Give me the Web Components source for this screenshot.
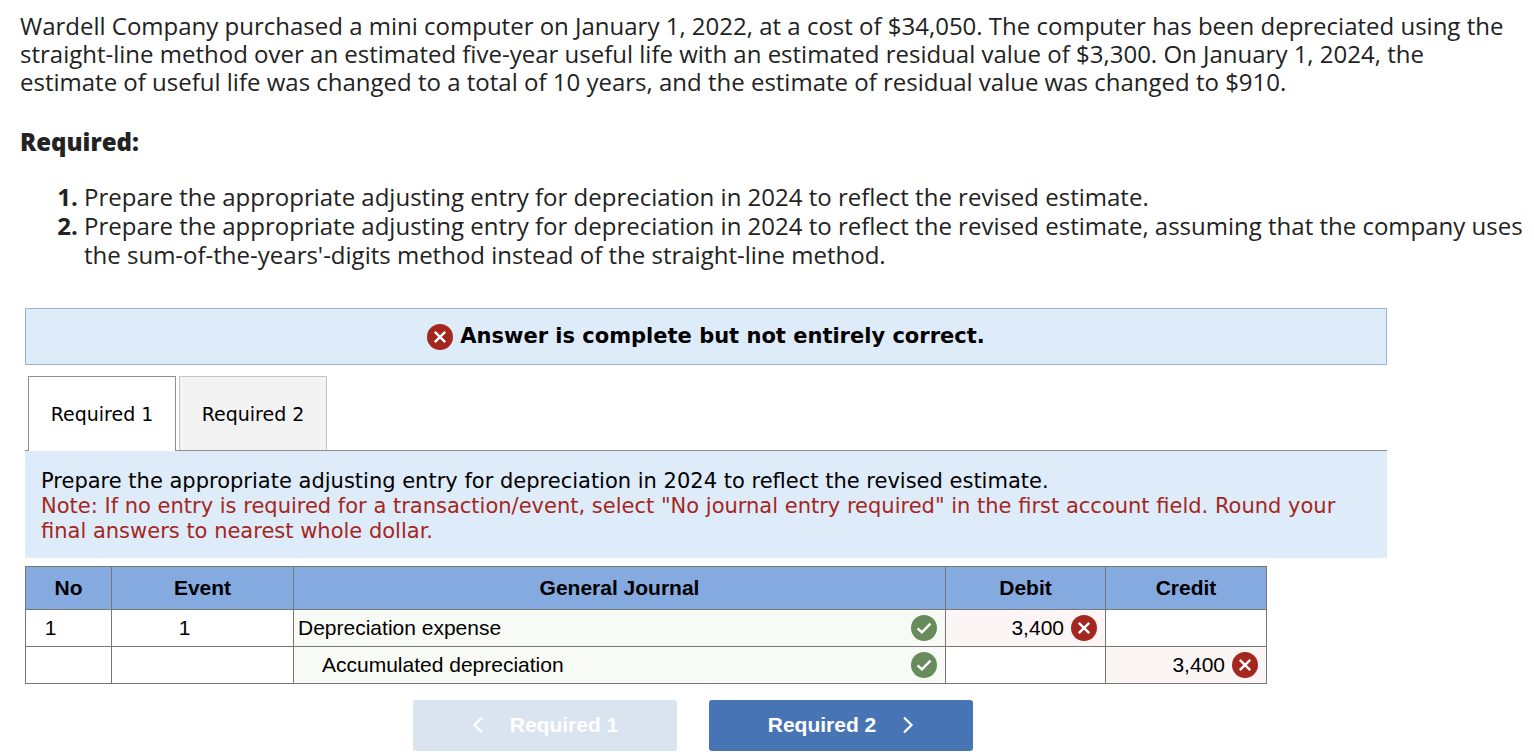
<!DOCTYPE html>
<html lang="en">
<head>
<meta charset="utf-8">
<meta name="viewport" content="width=device-width, initial-scale=1">
<title>Wardell Company - Adjusting entry</title>
<style>
  body {
    margin: 0;
    background: #fff;
    color: #000;
    font-family: "DejaVu Sans", Verdana, sans-serif;
  }
  .worksheet {
    display: block;
    max-width: 1362px;
    margin: 39px 25px 0;
  }
</style>
</head>
<body>
<question-prompt>
  <p>Wardell Company purchased a mini computer on January 1, 2022, at a cost of $34,050. The computer has been depreciated using the straight-line method over an estimated five-year useful life with an estimated residual value of $3,300. On January 1, 2024, the estimate of useful life was changed to a total of 10 years, and the estimate of residual value was changed to $910.</p>
  <strong slot="heading">Required:</strong>
  <li slot="steps">Prepare the appropriate adjusting entry for depreciation in 2024 to reflect the revised estimate.</li>
  <li slot="steps">Prepare the appropriate adjusting entry for depreciation in 2024 to reflect the revised estimate, assuming that the company uses the sum-of-the-years'-digits method instead of the straight-line method.</li>
</question-prompt>

<main class="worksheet">
  <answer-banner>Answer is complete but not entirely correct.</answer-banner>
  <tab-strip labels="Required 1,Required 2"></tab-strip>
  <instruction-panel>
    Prepare the appropriate adjusting entry for depreciation in 2024 to reflect the revised estimate.
    <span slot="note">Note: If no entry is required for a transaction/event, select "No journal entry required" in the first account field. Round your final answers to nearest whole dollar.</span>
  </instruction-panel>
  <journal-table></journal-table>
  <step-nav>
    <step-button direction="previous" disabled>Required 1</step-button>
    <step-button direction="next">Required 2</step-button>
  </step-nav>
</main>

<script>
/**
 * Creates a template element from a string of markup.
 *
 * @param {string} markup - The markup and styles of a component.
 * @returns {HTMLTemplateElement} The template.
 */
const createTemplate = markup => {
  const template = document.createElement('template')
  template.innerHTML = markup
  return template
}

/**
 * Base class that attaches the shadow root from a static template.
 */
class TemplateElement extends HTMLElement {
  constructor () {
    super()
    this.attachShadow({ mode: 'open' }).appendChild(this.constructor.template.content.cloneNode(true))
  }
}

/**
 * The question text with its list of requirements.
 */
customElements.define('question-prompt', class extends TemplateElement {
  static template = createTemplate(`
    <style>
      :host {
        display: block;
        padding: 12px 8px 0 20px;
        color: #222;
        font-family: "Open Sans", sans-serif;
        font-size: 24px;
        line-height: 28px;
      }
      ::slotted(p) {
        margin: 0;
        padding-right: 16px;
      }
      h2 {
        margin: 32px 0 26px;
        font-size: 24px;
        line-height: 28px;
      }
      ol {
        margin: 0;
        padding-left: 64px;
        line-height: 29px;
      }
      ::slotted(li)::marker {
        font-weight: bold;
      }
    </style>
    <slot></slot>
    <h2><slot name="heading"></slot></h2>
    <ol><slot name="steps"></slot></ol>
  `)
})

/**
 * A round mark: a white tick on green, or a white cross on red.
 */
customElements.define('status-icon', class extends TemplateElement {
  static template = createTemplate(`
    <style>
      :host {
        display: block;
        flex: none;
        width: 26px;
        height: 26px;
      }
      svg {
        display: block;
      }
      .wrong, :host([state="wrong"]) .right {
        display: none;
      }
      :host([state="wrong"]) .wrong {
        display: block;
      }
      path {
        fill: none;
        stroke: #fff;
        stroke-width: 2.4;
      }
    </style>
    <svg class="right" width="26" height="26" viewBox="0 0 26 26" aria-hidden="true">
      <circle cx="13" cy="13" r="13" fill="#688b5b"/>
      <path d="M6.6 13.4l4.3 4 8.6-8.8"/>
    </svg>
    <svg class="wrong" width="26" height="26" viewBox="0 0 26 26" aria-hidden="true">
      <circle cx="13" cy="13" r="13" fill="#a3271f"/>
      <path d="M7.8 7.8l10.4 10.4M18.2 7.8L7.8 18.2"/>
    </svg>
  `)
})

/**
 * The result banner.
 */
customElements.define('answer-banner', class extends TemplateElement {
  static template = createTemplate(`
    <style>
      :host {
        display: flex;
        align-items: center;
        justify-content: center;
        gap: 7px;
        padding: 14px 0;
        border: 1px solid #94b5de;
        background: #deebf8;
        font-size: 21px;
        font-weight: bold;
        line-height: 27px;
      }
    </style>
    <status-icon state="wrong"></status-icon>
    <span><slot></slot></span>
  `)
})

/**
 * The row of tabs.
 */
customElements.define('tab-strip', class extends TemplateElement {
  static template = createTemplate(`
    <style>
      :host {
        display: flex;
        gap: 3px;
        margin-top: 11px;
        padding-left: 3px;
        border-bottom: 1px solid #8f8f8f;
      }
      button {
        min-width: 148px;
        padding: 25px 0 23px;
        border: 1px solid #c4c4c4;
        border-bottom: 0;
        background: #f3f3f3;
        color: #000;
        font-family: inherit;
        font-size: 19px;
        line-height: 25px;
        cursor: pointer;
      }
      button[aria-selected="true"] {
        margin-bottom: -1px;
        padding-bottom: 24px;
        border-color: #8f8f8f;
        background: #fff;
      }
    </style>
  `)

  /**
   * Adds one tab button for each label.
   */
  connectedCallback () {
    this.setAttribute('role', 'tablist')
    this.getAttribute('labels').split(',').forEach((label, index) => {
      const tab = document.createElement('button')
      tab.type = 'button'
      tab.textContent = label
      tab.setAttribute('role', 'tab')
      tab.setAttribute('aria-selected', index === 0)
      tab.addEventListener('click', this.#handleClick)
      this.shadowRoot.append(tab)
    })
  }

  /**
   * Selects the clicked tab.
   *
   * @param {Event} event - The click event.
   */
  #handleClick = event => {
    for (const tab of this.shadowRoot.querySelectorAll('button')) {
      tab.setAttribute('aria-selected', tab === event.currentTarget)
    }
  }
})

/**
 * The instructions above the journal.
 */
customElements.define('instruction-panel', class extends TemplateElement {
  static template = createTemplate(`
    <style>
      :host {
        display: block;
        padding: 18px 16px 14px;
        background: #deebf8;
        font-size: 21px;
        line-height: 25px;
      }
      p {
        margin: 0;
      }
      .note {
        color: #a3271f;
      }
    </style>
    <p><slot></slot></p>
    <p class="note"><slot name="note"></slot></p>
  `)
})

/**
 * The journal entry table.
 */
customElements.define('journal-table', class extends TemplateElement {
  static template = createTemplate(`
    <style>
      :host {
        display: block;
        margin-top: 8px;
        font-family: "Liberation Sans", Arial, sans-serif;
        font-size: 21px;
        line-height: 26px;
      }
      table {
        width: 100%;
        max-width: 1242px;
        border-collapse: collapse;
        table-layout: fixed;
      }
      col.no { width: 86px; }
      col.event { width: 182px; }
      col.debit { width: 160px; }
      col.credit { width: 161px; }
      th, td {
        padding: 0;
        border: 1px solid #777;
      }
      th {
        height: 42px;
        background: #84aae0;
      }
      td {
        height: 36px;
      }
      .number {
        padding-right: 36px;
        text-align: center;
      }
      .account {
        background: #f8faf6;
      }
      .incorrect {
        background: #fcf5f5;
      }
      .cell {
        display: flex;
        align-items: center;
        gap: 7px;
        padding: 0 8px 0 4px;
      }
      .account .cell {
        justify-content: space-between;
      }
      .account .indent {
        padding-left: 28px;
      }
      .incorrect .cell {
        justify-content: flex-end;
      }
    </style>
    <table>
      <colgroup>
        <col class="no"><col class="event"><col><col class="debit"><col class="credit">
      </colgroup>
      <thead>
        <tr>
          <th scope="col">No</th>
          <th scope="col">Event</th>
          <th scope="col">General Journal</th>
          <th scope="col">Debit</th>
          <th scope="col">Credit</th>
        </tr>
      </thead>
      <tbody>
        <tr>
          <td class="number">1</td>
          <td class="number">1</td>
          <td class="account"><div class="cell">Depreciation expense<status-icon></status-icon></div></td>
          <td class="incorrect"><div class="cell">3,400<status-icon state="wrong"></status-icon></div></td>
          <td></td>
        </tr>
        <tr>
          <td></td>
          <td></td>
          <td class="account"><div class="cell indent">Accumulated depreciation<status-icon></status-icon></div></td>
          <td></td>
          <td class="incorrect"><div class="cell">3,400<status-icon state="wrong"></status-icon></div></td>
        </tr>
      </tbody>
    </table>
  `)
})

/**
 * The bar that holds the step buttons.
 */
customElements.define('step-nav', class extends TemplateElement {
  static template = createTemplate(`
    <style>
      :host {
        display: flex;
        justify-content: center;
        gap: 32px;
        margin-top: 16px;
        padding-right: 26px;
      }
    </style>
    <slot></slot>
  `)
})

/**
 * A button to the previous or the next step.
 */
customElements.define('step-button', class extends TemplateElement {
  static template = createTemplate(`
    <style>
      :host {
        display: block;
      }
      button {
        display: flex;
        align-items: center;
        justify-content: center;
        gap: 26px;
        width: 264px;
        padding: 12px 0 13px;
        border: 0;
        border-radius: 3px;
        background: #4774b5;
        color: #fff;
        font-family: "Liberation Sans", Arial, sans-serif;
        font-size: 21px;
        font-weight: bold;
        line-height: 26px;
        cursor: pointer;
      }
      button:disabled {
        background: #dae4f0;
        cursor: default;
      }
      :host([direction="previous"]) button {
        flex-direction: row-reverse;
      }
      :host([direction="previous"]) path {
        transform: scaleX(-1);
        transform-origin: center;
      }
      path {
        fill: none;
        stroke: currentColor;
        stroke-width: 2.2;
      }
    </style>
    <button type="button">
      <span><slot></slot></span>
      <svg width="12" height="18" viewBox="0 0 12 18" aria-hidden="true"><path d="M2 1.5l7.5 7.5L2 16.5"/></svg>
    </button>
  `)

  /**
   * Passes the disabled state on to the inner button.
   */
  connectedCallback () {
    this.shadowRoot.querySelector('button').disabled = this.hasAttribute('disabled')
  }
})
</script>
</body>
</html>
